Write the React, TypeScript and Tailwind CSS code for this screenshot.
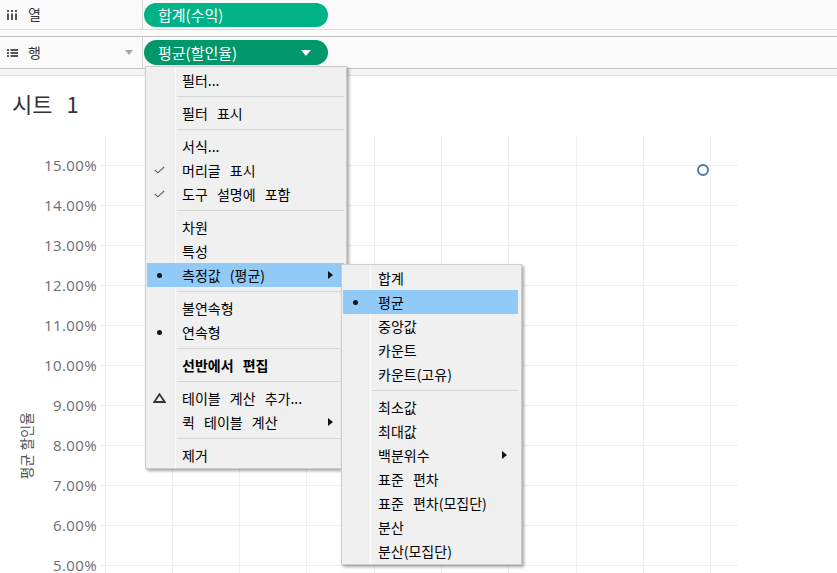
import React from "react";

type Item =
  | "sep"
  | {
      t: string;
      icon?: "check" | "dot" | "delta";
      arrow?: boolean;
      hl?: boolean;
      bold?: boolean;
    };

const mainItems: Item[] = [
  { t: "필터..." },
  "sep",
  { t: "필터 표시" },
  "sep",
  { t: "서식..." },
  { t: "머리글 표시", icon: "check" },
  { t: "도구 설명에 포함", icon: "check" },
  "sep",
  { t: "차원" },
  { t: "특성" },
  { t: "측정값 (평균)", icon: "dot", arrow: true, hl: true },
  "sep",
  { t: "불연속형" },
  { t: "연속형", icon: "dot" },
  "sep",
  { t: "선반에서 편집", bold: true },
  "sep",
  { t: "테이블 계산 추가...", icon: "delta" },
  { t: "퀵 테이블 계산", arrow: true },
  "sep",
  { t: "제거" },
];

const subItems: Item[] = [
  { t: "합계" },
  { t: "평균", icon: "dot", hl: true },
  { t: "중앙값" },
  { t: "카운트" },
  { t: "카운트(고유)" },
  "sep",
  { t: "최소값" },
  { t: "최대값" },
  { t: "백분위수", arrow: true },
  { t: "표준 편차" },
  { t: "표준 편차(모집단)" },
  { t: "분산" },
  { t: "분산(모집단)" },
];

function Icon({ kind }: { kind?: "check" | "dot" | "delta" }) {
  if (kind === "check")
    return (
      <svg width="11" height="8" viewBox="0 0 11 8">
        <polyline points="0.8,3.8 3.8,6.8 10.2,0.8" fill="none" stroke="#555" strokeWidth="1.1" />
      </svg>
    );
  if (kind === "dot")
    return <span className="block w-[5px] h-[5px] rounded-full bg-[#111]" />;
  if (kind === "delta")
    return (
      <svg width="13" height="10" viewBox="0 0 13 10">
        <polygon points="6.5,1.2 11.8,9 1.2,9" fill="none" stroke="#333" strokeWidth="1.8" strokeLinejoin="miter" />
      </svg>
    );
  return null;
}

function Arrow() {
  return (
    <svg width="5" height="8" viewBox="0 0 5 8" className="ml-auto mr-[11px] shrink-0">
      <polygon points="0,0 5,4 0,8" fill="#111" />
    </svg>
  );
}

function MenuRows({ items, sepIndent }: { items: Item[]; sepIndent: string }) {
  return (
    <>
      {items.map((it, i) =>
        it === "sep" ? (
          <div key={i} className="h-[9px] flex items-center">
            <div className={`${sepIndent} h-px flex-1 bg-[#d7d7d7]`} />
          </div>
        ) : (
          <div
            key={i}
            className={`h-[24px] flex items-center ${it.hl ? "bg-[#91c9f7]" : ""}`}
          >
            <span className="w-[24px] flex justify-center items-center shrink-0">
              <Icon kind={it.icon} />
            </span>
            <span
              className={`pl-[11px] text-[14px] text-black whitespace-nowrap [word-spacing:6px] ${
                it.bold ? "font-bold" : ""
              }`}
            >
              {it.t}
            </span>
            {it.arrow && <Arrow />}
          </div>
        )
      )}
    </>
  );
}

const yLabels = ["15.00%", "14.00%", "13.00%", "12.00%", "11.00%", "10.00%", "9.00%", "8.00%", "7.00%", "6.00%", "5.00%"];

function Plot() {
  const w = 638;
  const h = 438;
  const vx = Array.from({ length: 10 }, (_, k) => 4.5 + k * 67.3);
  const hy = Array.from({ length: 11 }, (_, k) => 30.5 + k * 40);
  return (
    <svg width={w} height={h} viewBox={`0 0 ${w} ${h}`} className="shrink-0">
      {vx.map((x, i) => (
        <line key={"v" + i} x1={Math.round(x) + 0.5} y1={0} x2={Math.round(x) + 0.5} y2={h} stroke="#efefef" strokeWidth="1" />
      ))}
      {hy.map((y, i) => (
        <line key={"h" + i} x1={0} y1={y} x2={w} y2={y} stroke="#efefef" strokeWidth="1" />
      ))}
      <circle cx={603} cy={35} r={5} fill="#fff" stroke="#4e79a7" strokeWidth="2" />
    </svg>
  );
}

function ColIcon() {
  return (
    <svg width="10" height="10" viewBox="0 0 10 10">
      <rect x="0" y="0" width="2" height="2" fill="#555" />
      <rect x="4" y="0" width="2" height="2" fill="#555" />
      <rect x="8" y="0" width="2" height="2" fill="#555" />
      <rect x="0" y="3.5" width="2" height="6.5" fill="#555" />
      <rect x="4" y="3.5" width="2" height="6.5" fill="#555" />
      <rect x="8" y="3.5" width="2" height="6.5" fill="#555" />
    </svg>
  );
}

function RowIcon() {
  return (
    <svg width="11" height="8" viewBox="0 0 11 8">
      <rect x="0" y="0" width="2" height="2" fill="#555" />
      <rect x="0" y="3" width="2" height="2" fill="#555" />
      <rect x="0" y="6" width="2" height="2" fill="#555" />
      <rect x="3.5" y="0" width="7.5" height="2" fill="#555" />
      <rect x="3.5" y="3" width="7.5" height="2" fill="#555" />
      <rect x="3.5" y="6" width="7.5" height="2" fill="#555" />
    </svg>
  );
}

export default function App() {
  return (
    <div className="relative w-[837px] h-[573px] overflow-hidden bg-white font-['Noto_Sans_CJK_KR',sans-serif]">
      {/* Shelves */}
      <div className="bg-[#fafafa]">
        <div className="flex h-[30px] border-b border-[#d9d9d9]">
          <div className="w-[143px] border-r border-[#d4d4d4] flex items-center pl-[7px] gap-[11px]">
            <ColIcon />
            <span className="text-[14px] text-[#333]">열</span>
          </div>
          <div className="flex items-center pl-[1px]">
            <div className="w-[184px] h-[24px] rounded-full bg-[#00b386] flex items-center pl-[14px]">
              <span className="text-[15px] text-white leading-none">합계(수익)</span>
            </div>
          </div>
        </div>
        <div className="h-[6px]" />
        <div className="flex h-[33px] border-t border-b border-[#c4c4c4]">
          <div className="w-[143px] border-r border-[#d4d4d4] flex items-center pl-[7px] gap-[10px]">
            <RowIcon />
            <span className="text-[14px] text-[#333]">행</span>
            <svg width="8" height="5" viewBox="0 0 8 5" className="ml-auto mr-[9px]">
              <polygon points="0,0 8,0 4,5" fill="#a8a8a8" />
            </svg>
          </div>
          <div className="flex items-center pl-[1px]">
            <div className="w-[184px] h-[25px] rounded-full bg-[#00976a] flex items-center pl-[14px]">
              <span className="text-[15px] text-white leading-none">평균(할인율)</span>
              <svg width="10" height="6" viewBox="0 0 10 6" className="ml-auto mr-[17px]">
                <polygon points="0,0 10,0 5,6" fill="#fff" />
              </svg>
            </div>
          </div>
        </div>
      </div>
      <div className="h-[7px] bg-[#f4f4f4] border-b border-[#e2e2e2]" />

      {/* Sheet */}
      <div className="pt-[14px] pl-[12px] text-[22px] leading-[26px] text-[#333] [word-spacing:9px]">시트 1</div>

      <div className="mt-[19px] flex">
        <div className="w-[48px] shrink-0 flex justify-center items-start pl-[4px] pt-[277px]">
          <span className="[writing-mode:vertical-rl] [text-orientation:sideways] rotate-180 text-[14px] leading-[16px] text-[#555] whitespace-nowrap">
            평균 할인율
          </span>
        </div>
        <div className="w-[49px] shrink-0 pt-[10px] flex flex-col items-end font-['Open_Sans',sans-serif] text-[15px] text-[#6b6e72] tracking-[0.4px]">
          {yLabels.map((l) => (
            <div key={l} className="h-[40px] flex items-center leading-none">
              {l}
            </div>
          ))}
        </div>
        <div className="w-[3px] shrink-0" />
        <Plot />
      </div>

      {/* Main context menu */}
      <div className="absolute left-[145px] top-[66px] w-[202px] border border-[#cccccc] bg-[linear-gradient(to_right,#f0f0f0_29px,#fcfcfc_29px,#fcfcfc_30px,#f0f0f0_30px)] pt-[1px] pb-[1px] pl-[1px] pr-[2px] shadow-[2px_2px_3px_rgba(0,0,0,0.35)]">
        <MenuRows items={mainItems} sepIndent="ml-[30px]" />
      </div>

      {/* Submenu */}
      <div className="absolute left-[341px] top-[264px] w-[181px] border border-[#cccccc] bg-[linear-gradient(to_right,#f0f0f0_28px,#fcfcfc_28px,#fcfcfc_29px,#f0f0f0_29px)] pt-[1px] pb-[1px] pl-[1px] pr-[3px] shadow-[2px_2px_3px_rgba(0,0,0,0.35)]">
        <MenuRows items={subItems} sepIndent="ml-[29px]" />
      </div>
    </div>
  );
}
